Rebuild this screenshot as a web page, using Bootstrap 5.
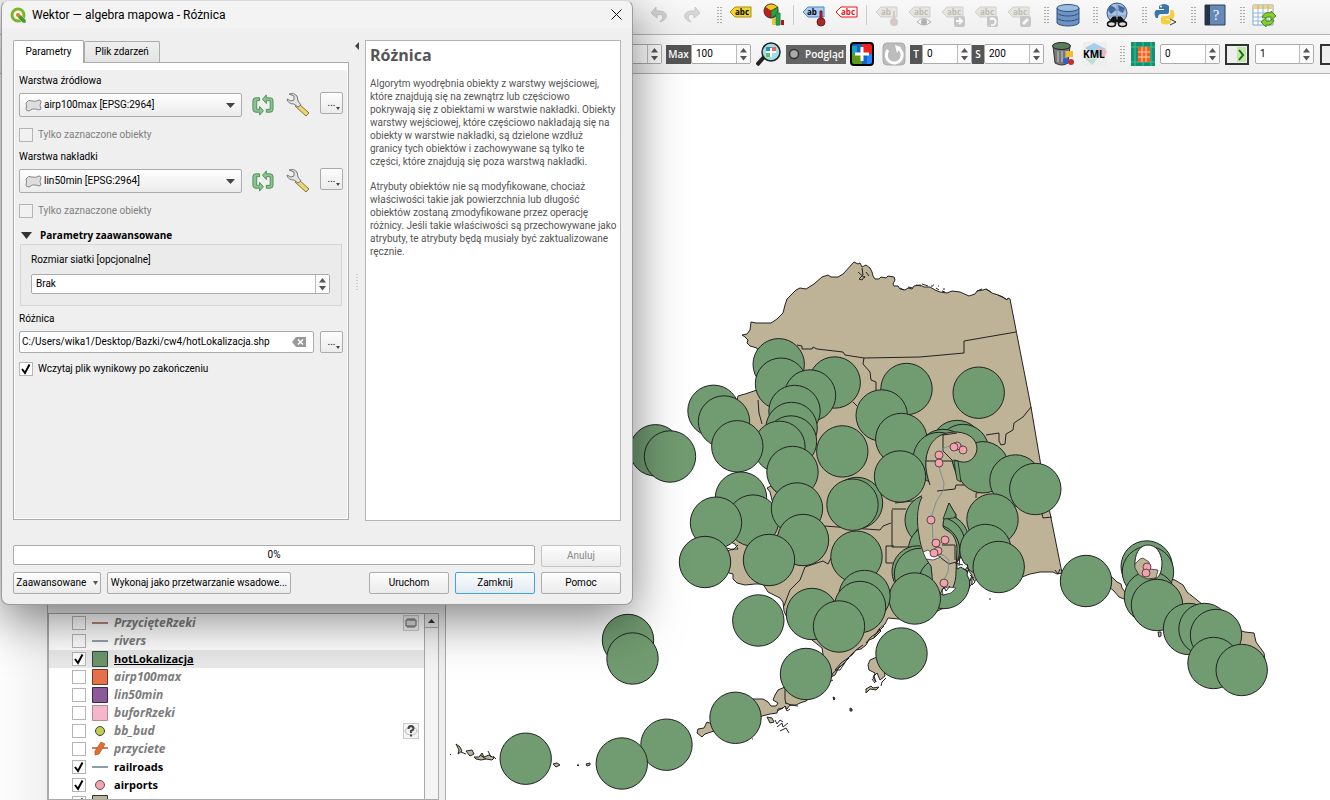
<!DOCTYPE html>
<html lang="pl">
<head>
<meta charset="utf-8">
<meta name="viewport" content="width=device-width, initial-scale=1">
<title>Wektor — algebra mapowa - Różnica</title>
<link href="https://cdn.jsdelivr.net/npm/bootstrap@5.3.0/dist/css/bootstrap.min.css" rel="stylesheet">
<style>
:root{--dlg:632px;--edge:#ababab;--face:#efefef}
body{font:10px/14px Roboto,"Open Sans",sans-serif;color:#000;background:#fff;height:100vh;overflow:hidden}
button,input,select{font:inherit;color:inherit}
svg{display:block;flex:none}
.bold-ui{font-family:"Open Sans",sans-serif;font-weight:700}
/* toolbars */
.tools{background:linear-gradient(#f8f8f8,#efefef);border-bottom:1px solid #b4b4b4;white-space:nowrap;overflow:hidden}
.tools-a{height:35px;padding-left:calc(var(--dlg) + 10px);padding-bottom:4px}
.tools-b{height:39px;padding-left:calc(var(--dlg) - 34px)}
.tools button{border:0;background:none;padding:0;display:flex;justify-content:center;align-items:center;flex:none}
.tools-a button{width:33px;height:30px}
.faded{opacity:.4}
.grip{width:16px;height:18px;flex:none;background:radial-gradient(circle,#aaa 40%,transparent 50%) 9px 0/2px 3px repeat-y,radial-gradient(circle,#aaa 40%,transparent 50%) 12px 0/2px 3px repeat-y}
.bar-line{width:7px;height:20px;flex:none;background:linear-gradient(#ccc,#ccc) center/1px 100% no-repeat}
.dark-tag,.tools button.dark-tag{background:#555;color:#fff;height:19px;line-height:19px;flex:none;font-family:"Open Sans",sans-serif;font-weight:600;text-align:center}
.tools button.preview{width:60px;gap:5px;background:#636363}
.spin{display:flex;background:#fff;border:1px solid var(--edge);border-radius:2px;height:20px;flex:none;overflow:hidden}
.spin input{border:0;outline:0;min-width:0;flex:1;padding:0 4px;background:none}
.spin .arrows{width:14px;border-left:1px solid #bbb;display:flex;align-items:center;justify-content:center;background:#fafafa;flex:none}
/* layer panel */
.gutter{width:47px;background:linear-gradient(90deg,#fdfdfd,#f1f1f1);flex:none}
.layers{width:399px;background:#efefef;border-left:1px solid #aaa;border-right:1px solid #aaa;padding-right:6px;flex:none}
.docked{height:539px;flex:none}
.tree{border:1px solid #aaa;background:#fff;flex:1;min-height:0;overflow:hidden}
.layer{height:18px;padding:0 5px 0 23px;gap:6px;font:700 11px/18px "Open Sans",sans-serif}
.layer.off label{font-size:12px;font-style:italic;color:#7c7c7c}
.layer.current{background:#e9e9e9}
.layer.current label{text-decoration:underline}
.tick{appearance:none;width:14px;height:14px;margin:0;border:1px solid #b5b5b5;background:#fff center/12px 12px no-repeat;flex:none}
.tick:checked{background-image:url("data:image/svg+xml,%3Csvg xmlns='http://www.w3.org/2000/svg' viewBox='0 0 12 12'%3E%3Cpath d='M2 6l3 4 4.500-8.500' fill='none' stroke='%23000' stroke-width='2'/%3E%3C/svg%3E")}
.tick:disabled{background-color:#f1f1f1}
.flag{width:16px;height:16px;border:1px solid #ccc;background:#f4f4f4;display:flex;align-items:center;justify-content:center}
.scroller{width:14px;border-left:1px solid #aaa;background:#f4f4f4;flex:none}
.scroller button{width:13px;height:14px;border:0;border-bottom:1px solid #aaa;background:#eee;padding:3px}
.map-view{min-width:0}
/* dialog */
.tool-dialog{position:absolute;left:1px;top:0;width:632px;max-width:100%;background:var(--face);border:1px solid #9a9a9a;border-top-color:#d8d8d8;border-radius:8px;box-shadow:0 14px 50px rgba(0,0,0,.5)}
.title-row{height:27px;background:#f3f3f3;border-radius:8px 8px 0 0;padding:0 10px 0 8px;font-size:12px;gap:6px}
.title-row button{border:0;background:none;padding:0}
.dialog-body{padding:12px 11px 10px}
.tab{border:1px solid var(--edge);border-bottom:0;border-radius:2px 2px 0 0;background:linear-gradient(#efefef,#e4e4e4);height:21px;padding:0;width:76px}
.tab.on{background:#fff;height:23px;width:71px;margin-bottom:-1px;position:relative}
.page{border:1px solid var(--edge);background:#fff;padding:7px 1px 1px;height:458px}
.page-in{background:var(--face);height:100%;padding:4px}
.left-pane{width:336px;flex:none}
.help-pane{border:1px solid #b5b5b5;background:#fff;padding:4px 2px 4px 4px;width:256px;height:481px;color:#555;line-height:13px;flex:none}
.help-pane h1{font-size:16px;line-height:20px;margin:0 0 12px}
.help-pane p{margin:0 0 12px}
.splitter{width:16px;padding-top:2px;flex:none}
.param-row{margin:4px 0 11px}
.combo{display:flex;align-items:center;gap:2px;height:24px;width:223px;margin-top:1px;border:1px solid var(--edge);border-radius:2px;background:linear-gradient(#fff,#ebebeb);padding:0 6px 0 5px}
.combo select{appearance:none;border:0;outline:0;flex:1;min-width:0;padding:0;background:none}
.face-btn{border:1px solid var(--edge);border-radius:2px;background:linear-gradient(#fdfdfd,#ebebeb);height:22px;padding:0;line-height:18px;color:#000}
.face-btn:disabled{color:#888;border-color:#c4c4c4}
.face-btn.primary{border-color:#3fa3ef;background:linear-gradient(#fafcfd,#e2ebf2)}
.more{width:23px;position:relative}
.more::after{content:"";position:absolute;right:2px;bottom:3px;border:2px solid transparent;border-top:3px solid #444;border-bottom:0}
.icon-btn{border:0;background:none;padding:0}
.field{height:14px;line-height:14px}
.tick-row{height:14px;gap:5px;color:#808080}
.adv{border:1px solid #d4d4d4;background:#ebebeb;height:62px;padding:8px 11px 0 10px;margin:2px 1px 0}
.adv .spin{margin-top:7px}
.out-label{margin-top:6px}
.out-row{margin:5px 0 9px}
.path-box{width:295px;height:22px;border:1px solid var(--edge);border-radius:2px;background:#fff;padding:0 7px 0 2px}
.path-box input{border:0;outline:0;flex:1;min-width:0;padding:0;background:none}
.meter{height:20px;width:522px;border:1px solid var(--edge);border-radius:2px;background:#fff}
.w80{width:80px}
</style>
</head>
<body class="d-flex flex-column">
<svg width="0" height="0" class="position-absolute">
<defs>
<g id="arrows"><path d="M1 5.500L4.500 1 8 5.500z" fill="#555"/><path d="M1 9L4.500 13.500 8 9z" fill="#555"/></g>
<g id="label"><path d="M1 7l5-5h16v10H6z" stroke-width="1"/></g>
<g id="poly"><path d="M1 4q2-4 6-2 4 1 7-1 2 0 2 2-2 3 0 7-2 2-5 0-4-1-7 2-3 0-3-2 1-3 0-6z" fill="#ddd" stroke="#888"/></g>
<g id="cycle"><path d="M8 4H4Q1 4 1 7v9q0 3 3 3h4v3l4-4.500L8 13v3H5V7h3zM15 19h4q3 0 3-3V7q0-3-3-3h-4V1l-4 4.500L15 10V7h4v9h-4z" fill="#8cc191" stroke="#4f8f58" stroke-linejoin="round"/></g>
<g id="wrench"><path d="M12 11l11 10-3 3L9 14z" fill="#ecd573" stroke="#85733b"/><path d="M3 2q5-2 8 2l1 5 3 4-3 2-4-3Q2 12 1 7l4 2 3-1V4z" fill="#e3e3e3" stroke="#777"/></g>
</defs>
</svg>

<header>
<nav class="tools tools-a d-flex align-items-center" aria-label="Etykiety">
<button class="faded"><svg width="20" height="20" viewBox="0 0 20 20"><path d="M7 2L2 8l6 5v-3c6-2 8 2 3 7 9-3 9-12-4-11z" fill="#999" stroke="#777"/></svg></button>
<button class="faded"><svg width="20" height="20" viewBox="0 0 20 20"><path d="M13 2l5 6-6 5v-3C6 8 4 12 9 17 0 14 0 5 13 6z" fill="#aaa" stroke="#888"/></svg></button>
<span class="grip"></span>
<button><svg width="24" height="24" viewBox="0 0 24 24"><g fill="#f3d42a" stroke="#ab9010" transform="translate(0 2)"><use href="#label"/></g><text x="6" y="12" font-size="8" font-weight="700" font-family="Open Sans">abc</text></svg></button>
<button><svg width="24" height="24" viewBox="0 0 24 24"><circle cx="9" cy="8" r="7" fill="#ca1b1b" stroke="#333"/><path d="M9 8L3 4q6-6 13 0z" fill="#f4c717" stroke="#333" stroke-width=".6"/><path d="M9 8l7-4q1 8-7 11z" fill="#2f9e3c" stroke="#333" stroke-width=".6"/><path d="M10 15h3v7h-3z" fill="#f4c717"/><path d="M14 10h4v12h-4z" fill="#2f9e3c" stroke="#185"/><path d="M19 17h3v5h-3z" fill="#b11"/></svg></button>
<span class="bar-line"></span>
<button><svg width="24" height="24" viewBox="0 0 24 24"><g fill="#a9cdf3" stroke="#4c86c9" transform="translate(0 2)"><use href="#label"/></g><text x="5" y="12" font-size="8" font-weight="700" font-family="Open Sans">ab</text><path d="M18 8h2v8h-2z" fill="#a52a2a" stroke="#7a1c1c"/><circle cx="19" cy="19" r="4" fill="#a52a2a" stroke="#7a1c1c"/></svg></button>
<button><svg width="24" height="24" viewBox="0 0 24 24"><g fill="#fff" stroke="#e11" transform="translate(0 2)"><use href="#label"/></g><text x="6" y="12" font-size="8" font-weight="700" fill="#e11" font-family="Open Sans">abc</text></svg></button>
<span class="bar-line"></span>
<button class="faded"><svg width="24" height="24" viewBox="0 0 24 24"><g fill="#d2d0b9" stroke="#999" transform="translate(0 2)"><use href="#label"/></g><text x="6" y="12" font-size="8" font-weight="700" fill="#666" font-family="Open Sans">ab</text><path d="M18 8h2v8h-2z" fill="#a88"/><circle cx="19" cy="19" r="4" fill="#a88"/></svg></button>
<button class="faded"><svg width="24" height="24" viewBox="0 0 24 24"><g fill="#d2d0b9" stroke="#999" transform="translate(0 2)"><use href="#label"/></g><text x="6" y="12" font-size="8" font-weight="700" fill="#666" font-family="Open Sans">abc</text><path d="M9 19q6-7 14 0-7 6-14 0z" fill="#fff" stroke="#555"/><circle cx="16" cy="19" r="3" fill="#555"/></svg></button>
<button class="faded"><svg width="24" height="24" viewBox="0 0 24 24"><g fill="#d2d0b9" stroke="#999" transform="translate(0 2)"><use href="#label"/></g><text x="6" y="12" font-size="8" font-weight="700" fill="#666" font-family="Open Sans">abc</text><rect x="13" y="13" width="11" height="11" rx="2" fill="#888"/><path d="M15 18h6m-3-3l3 3-3 3" stroke="#fff" stroke-width="2" fill="none"/></svg></button>
<button class="faded"><svg width="24" height="24" viewBox="0 0 24 24"><g fill="#d2d0b9" stroke="#999" transform="translate(0 2)"><use href="#label"/></g><text x="6" y="12" font-size="8" font-weight="700" fill="#666" font-family="Open Sans">abc</text><rect x="13" y="13" width="11" height="11" rx="2" fill="#888"/><path d="M16 16a3.500 3.500 0 1 1 1 6m-1-6h4" stroke="#fff" stroke-width="2" fill="none"/></svg></button>
<button class="faded"><svg width="24" height="24" viewBox="0 0 24 24"><g fill="#d2d0b9" stroke="#999" transform="translate(0 2)"><use href="#label"/></g><text x="6" y="12" font-size="8" font-weight="700" fill="#666" font-family="Open Sans">abc</text><rect x="13" y="13" width="11" height="11" rx="2" fill="#888"/><path d="M16 21l5-5" stroke="#fff" stroke-width="3"/></svg></button>
<span class="grip"></span>
<button><svg width="24" height="24" viewBox="0 0 24 24"><path d="M1 5v15c3 4 19 4 22 0V5" fill="#6c93c4" stroke="#33527c"/><ellipse cx="12" cy="5" rx="11" ry="3.500" fill="#9cbbe0" stroke="#33527c"/><path d="M1 10c3 4 19 4 22 0M1 15c3 4 19 4 22 0" fill="none" stroke="#33527c"/></svg></button>
<span class="grip"></span>
<button><svg width="26" height="26" viewBox="0 0 26 26"><circle cx="13" cy="11" r="10" fill="#a6c2e0" stroke="#34557f"/><path d="M6 4q5 0 6 4l-5 4-3-4zM14 3l7 3-2 5-4-2z" fill="#3f6698"/><path d="M3 8h20M3 14h20M13 1v20" stroke="#5b80ad" stroke-width=".6"/><path d="M9 15l3 0v3l2 0v-3h3l5 6-6 1-3-3-3 3-6-1z" fill="#111" stroke="#111"/><g fill="#ddd" stroke="#111" stroke-width="1.500"><ellipse cx="7.500" cy="22" rx="4" ry="2.500"/><ellipse cx="18.500" cy="22" rx="4" ry="2.500"/></g></svg></button>
<span class="grip"></span>
<button><svg width="24" height="24" viewBox="0 0 24 24"><path d="M5 3q5-4 10 0v6q0 2-3 2H7q-3 0-3 4H2q-3-5 0-8h8V6H5z" fill="#3b77a8"/><path d="M16 7h3q3 5 0 9h-7v1h5v3q-5 3-10 0v-5q0-2 3-2h4q3-1 2-6z" fill="#f7cf3c"/><circle cx="7" cy="3.500" r="1" fill="#fff"/><path d="M16 16l6 3-6 3" fill="none" stroke="#333"/></svg></button>
<span class="grip"></span>
<button><svg width="22" height="24" viewBox="0 0 22 24"><path d="M1 2h20v20H1z" fill="#6689b8" stroke="#2f4257"/><path d="M1 2h5v20H1z" fill="#253444"/><text x="9" y="17" font-size="14" fill="#fff" font-family="Liberation Serif">?</text></svg></button>
<span class="grip"></span>
<button><svg width="24" height="24" viewBox="0 0 24 24"><path d="M1 2h20v20H1z" fill="#fff" stroke="#7ba4cc"/><path d="M1 2h20v4H1z" fill="#f3d27b"/><path d="M1 10h20M1 14h20M1 18h20M6 2v20M11 2v20M16 2v20" stroke="#8fb6dc"/><path d="M10 14q3-6 9-4V8l5 5-5 4v-3q-4-1-5 1zM22 17q-2 6-8 5v2l-5-5 5-4v3q4 1 5-1z" fill="#8acb2e" stroke="#4a8a16"/></svg></button>
</nav>

<nav class="tools tools-b d-flex align-items-center" aria-label="Raster">
<div class="spin me-1" style="width:64px"><input aria-label="Min" value=""><span class="arrows"><svg width="9" height="15"><use href="#arrows"/></svg></span></div>
<label class="dark-tag" for="mx" style="width:25px">Max</label>
<div class="spin" style="width:60px"><input id="mx" value="100"><span class="arrows"><svg width="9" height="15"><use href="#arrows"/></svg></span></div>
<button style="margin:0 5px"><svg width="25" height="24" viewBox="0 0 25 24"><path d="M8 15l-7 8" stroke="#222" stroke-width="4"/><circle cx="15" cy="10" r="9" fill="#9fe0e6" stroke="#222" stroke-width="1.500"/><path d="M10 5h5v5h-5z" fill="#2c8fb0"/><path d="M15 5h5v5h-5z" fill="#e66"/><path d="M10 10h5v5h-5z" fill="#6b6"/><path d="M15 6v9M10 10h10" stroke="#fff" stroke-width="2"/></svg></button>
<button class="dark-tag preview"><svg width="12" height="12"><circle cx="6" cy="6" r="4.500" fill="#aaa" stroke="#333" stroke-width="1.500"/></svg>Podgląd</button>
<button style="margin:0 8px 0 4px"><svg width="24" height="24" viewBox="0 0 24 24"><rect x="1" y="1" width="22" height="22" rx="3" fill="#1663c7"/><path d="M12 2h10v10H12z" fill="#e22"/><path d="M2 12h10v10H2z" fill="#5d9a16"/><path d="M2 4h5v8H2z" fill="#14a5b8"/><path d="M17 12h5v10h-5z" fill="#2686ff"/><path d="M12 5v14M5 12h14" stroke="#fff" stroke-width="3"/><rect x="1" y="1" width="22" height="22" rx="3" fill="none" stroke="#000" stroke-width="2"/></svg></button>
<button><svg width="24" height="24" viewBox="0 0 24 24"><rect x="1" y="1" width="22" height="22" rx="4" fill="#bcbcbc" stroke="#aaa"/><path d="M6 8a8 8 0 1 0 10-2" fill="none" stroke="#fff" stroke-width="3"/><path d="M13 3l6 2-4 6z" fill="#fff"/></svg></button>
<label class="dark-tag ms-1" for="tt" style="width:12px">T</label>
<div class="spin" style="width:50px"><input id="tt" value="0"><span class="arrows"><svg width="9" height="15"><use href="#arrows"/></svg></span></div>
<label class="dark-tag" for="ss" style="width:12px">S</label>
<div class="spin" style="width:60px"><input id="ss" value="200"><span class="arrows"><svg width="9" height="15"><use href="#arrows"/></svg></span></div>
<button style="margin:0 8px 0 7px"><svg width="24" height="24" viewBox="0 0 24 24"><path d="M2 4l2 17q7 4 13 0l2-17z" fill="#777" stroke="#333"/><path d="M7 9v11M11 9v11M15 9v10" stroke="#ccc"/><ellipse cx="10.500" cy="4" rx="9" ry="3.500" fill="#587d5b" stroke="#222"/><path d="M15 9h7v6h-7z" fill="#f2bd2b"/><circle cx="15" cy="19" r="3" fill="#2b62c4"/><circle cx="20" cy="20" r="3" fill="#cc2b2b"/></svg></button>
<button><svg width="24" height="24" viewBox="0 0 24 24"><path d="M0 0h24v24H0z" fill="#eee"/><path d="M2 6l9-5 12 6-8 9z" fill="#a5cdec"/><path d="M13 5l11 4-3 8z" fill="#f2b5b5"/><path d="M2 16l12 1-5 6z" fill="#b9dfd2"/><text x="0" y="16" font-size="10" font-weight="700" font-family="Open Sans">KML</text></svg></button>
<span class="grip ms-1 me-1"></span>
<button><svg width="24" height="24" viewBox="0 0 24 24"><path d="M0 0h24v24H0z" fill="#119174"/><path d="M4 0v24M20 0v24M0 5h24M0 20h24M12 0v24" stroke="#44c08b"/><path d="M7 5h12v15H7z" fill="#ff5a1f"/><path d="M11 5v15M15 5v15M7 10h12M7 15h12" stroke="#ffd9a6"/></svg></button>
<div class="spin" style="width:60px;margin:0 5px"><input aria-label="Pasmo" value="0"><span class="arrows"><svg width="9" height="15"><use href="#arrows"/></svg></span></div>
<button><svg width="24" height="24" viewBox="0 0 24 24"><path d="M1 3h22v19H1z" fill="#eee" stroke="#333" stroke-width="2"/><path d="M12 5h9v15h-9z" fill="#bfe8a4"/><path d="M14 8l4 5-4 5" fill="none" stroke="#1a6a1a" stroke-width="2"/></svg></button>
<div class="spin" style="width:59px;margin:0 6px"><input aria-label="Krok" value="1"><span class="arrows"><svg width="9" height="15"><use href="#arrows"/></svg></span></div>
<button><svg width="24" height="24" viewBox="0 0 24 24"><path d="M1 3h22v19H1z" fill="#eee" stroke="#333" stroke-width="2"/></svg></button>
</nav>
</header>

<main class="d-flex flex-grow-1" style="min-height:0">
<div class="gutter"></div>
<aside class="layers d-flex flex-column">
<div class="docked"></div>
<div class="tree d-flex">
<div class="flex-grow-1">
<div class="layer off d-flex align-items-center"><input class="tick" type="checkbox" id="l1"><svg width="16" height="4"><path d="M0 2h16" stroke="#b28675" stroke-width="2"/></svg><label for="l1">PrzycięteRzeki</label><span class="flag ms-auto"><svg width="12" height="10" viewBox="0 0 12 10"><path d="M1 2h10v6H1z" fill="#ddd" stroke="#666"/><path d="M3 0v2M5 0v2M7 0v2M9 0v2M3 8v2M5 8v2M7 8v2M9 8v2" stroke="#666"/></svg></span></div>
<div class="layer off d-flex align-items-center"><input class="tick" type="checkbox" id="l2"><svg width="16" height="4"><path d="M0 2h16" stroke="#95a2a8" stroke-width="2"/></svg><label for="l2">rivers</label></div>
<div class="layer current d-flex align-items-center"><input class="tick" type="checkbox" id="l3" checked><svg width="16" height="16"><path d="M.5.5h15v15H.5z" fill="#6c9569" stroke="#344"/></svg><label for="l3">hotLokalizacja</label></div>
<div class="layer off d-flex align-items-center"><input class="tick" type="checkbox" id="l4"><svg width="16" height="16"><path d="M.5.5h15v15H.5z" fill="#e77148" stroke="#733824"/></svg><label for="l4">airp100max</label></div>
<div class="layer off d-flex align-items-center"><input class="tick" type="checkbox" id="l5"><svg width="16" height="16"><path d="M.5.5h15v15H.5z" fill="#8d5a99" stroke="#3d2743"/></svg><label for="l5">lin50min</label></div>
<div class="layer off d-flex align-items-center"><input class="tick" type="checkbox" id="l6"><svg width="16" height="16"><path d="M.5.5h15v15H.5z" fill="#f3b6cb" stroke="#b68898"/></svg><label for="l6">buforRzeki</label></div>
<div class="layer off d-flex align-items-center"><input class="tick" type="checkbox" id="l7"><svg width="16" height="16"><circle cx="8" cy="8" r="4.500" fill="#bfcf4b" stroke="#444"/></svg><label for="l7">bb_bud</label><span class="flag ms-auto"><svg width="14" height="14" viewBox="0 0 14 14"><ellipse cx="7" cy="7" rx="6" ry="4" fill="#eee" stroke="#bbb"/><path d="M4.500 5q0-3 2.500-3t2.500 2.500Q9.500 6 7 7v2" fill="none" stroke="#444" stroke-width="2"/><path d="M6 10.500h2v2H6z" fill="#444"/></svg></span></div>
<div class="layer off d-flex align-items-center"><input class="tick" type="checkbox" id="l8"><svg width="16" height="14"><path d="M0 6h16" stroke="#b28675" stroke-width="2"/><path d="M9 0l4 2-6 10-4 1V9z" fill="#e2702c" stroke="#b4501a" stroke-width=".7"/></svg><label for="l8">przyciete</label></div>
<div class="layer d-flex align-items-center"><input class="tick" type="checkbox" id="l9" checked><svg width="16" height="4"><path d="M0 2h16" stroke="#8fa0a3" stroke-width="2"/></svg><label for="l9">railroads</label></div>
<div class="layer d-flex align-items-center"><input class="tick" type="checkbox" id="l10" checked><svg width="16" height="16"><circle cx="8" cy="8" r="4.500" fill="#f5a3ae" stroke="#555"/></svg><label for="l10">airports</label></div>
<div class="layer d-flex align-items-center"><input class="tick" type="checkbox" id="l11" checked><svg width="16" height="16"><path d="M.5.5h15v15H.5z" fill="#beb297" stroke="#333"/></svg><label for="l11">regions</label></div>
</div>
<div class="scroller"><button aria-label="Przewiń w górę"><svg width="7" height="5"><path d="M0 5l3.500-4L7 5z" fill="#333"/></svg></button></div>
</div>
</aside>
<section class="map-view flex-grow-1" aria-label="Mapa">
<svg width="100%" height="100%" viewBox="446 74 884 726" preserveAspectRatio="xMinYMin meet" stroke="#232323" stroke-linejoin="round">
<g fill="#beb297">
<path d="M854 262L858 264 860 263 862 267 866 265 870 268 872 272 873 276 875 279 879 279 881 277 886 278 888 276 894 277 895 280 893 284 894 286 898 286 900 289 905 290 908 288 912 289 914 286 920 285 924 287 930 287 935 290 940 292 947 293 952 291 960 292 969 296 975 294 977 291 983 290 986 289 992 293 998 295 1003 297 1007 300 1008 298 1010 299 1016.500 332.500 1031 407 1043 478 1062 573 1057 574 1053 572 1040 572 1030 574 1022 577 1004 580 985 570 970 586 962 600 935 612 910 620 888 618 885 624 879 629 881 631 874 638 869 640 866 645 861 649 856 650 852 655 848 658 844 664 839 667 835 675 829 678 826 684 820 690 806 701 800 703 796 705 790 705 787 709 785 706 783 708 778 709 777 713 770 714 762 716 740 728 728 718 750 705 753 699 763 699 768 702 771 706 776 706 778 703 773 700 775 695 778 690 785 687 800 675 812 665 824 661 822 648 812 640 800 625 788 620 784 611 783 602 780 598 768 592 763 584 755 584 745 585 737 583 733 579 733 574 729 573 720 555 732 549 738 549 735 544 726 540 735 530 765 518 775 510 772 500 770 492 767 488 771 486 776 492 780 485 768 470 760 455 750 425 735 410 738 396 745 394 757 390 765 375 757 348 750 346 747 343 748 340 745 337 742 335 747 334 750 330 751 322 756 323 771 323 777 319 783 313 785 305 787 299 792 294 796 290 800 288 806 289 814 284 822 277 828 275 831 277 838 277 843 274z"/>
<path d="M697 733l1-4 6-1 3-6 5 2 2 7-9 3-3 3zM1108 575l5 3 4 4 4 2 1 4 3 4 3 3-4 4-5-2-5-6-6-5zM1165 578l10 2 8 5 4 7 10 8 16 13 25 17 7 2 9 1 2 9 8 11 1 8-25-4-50-18-40-30zM868 665l2-5 7-3 7 12 1 7-5 4-3-7-3 3 2 6-3-4 2-5-6-3zM866 689l5-3 2 2 6-1-3 3-6-1-4 4zM456 744l4 3 2 4-4 3 1-4zM466 751l6-1 2 4-4 2zM474 757l5 0 3-4 2 4 5-2 5 3-2 2-6-1-5 1-5-1zM553 764l4-1 3 2-4 2zM586 764l4-1 0 2-3 1zM577 765l2 0-1 1zM767 717l5 1 2 4-4 1zM1158 632l3 0 0 4-2 1zM850 708l2 1 0 2-2 0zM833 697l2 1-1 2z"/>
</g>
<path d="M858 272l7 6M862 268l1 7-4 4 3 1 3-4M866 272l3 4M900 288l4 2M908 287l5 1M916 285l5 1M922 284l6 2M931 286l2 0M936 288l3 2M942 291l3 1M977 291l5-2M986 289l5 3M998 295l8 4M933 285h1M938 286h1M943 289h2M849 658l-9 9-7 6-2 5M863 645l-7 5-8 8-7 5-6 7 5 0 4-6M884 626l-7 7-6 4-5 6M833 680l-6 3M879 629l-5 8M775 720l2 4 3-4 3 2M777 727l5-4 1 4 5-4M780 731l6-3 3 5M785 707l2 4 3-2M786 703l5 2M790 705l8 1M777 711l6-3M488 751l3 6M480 755l6 4M493 756l3 3M450 754l1 1M461 752l5 2M886 678l-4 4-1 4M872 679l3 4M746 741l3-2M752 739h1M834 697v3M851 709v2M990 598v2" fill="none"/>
<path d="M797 345l5 1v3l10 0 1-2 4 2 26 3 2 3 19 3 56-1 44-4v-12l52-9M864 358l-1 6 7 8 1 8 5 2v9M1031 407l-8 10-9 6-1 7-7 4-1 10-4 1-2-4v-8l-13 2M758 400l1 13 3 11M853 402l4 4M824 526l14 1 42 3 3-4 8-3M892 510v37h16M892 509h14M895 503l26-3 16-9 18-2 1-4h9M886 546v17h7M886 546h8M805 567l-5 13-10 10-6 16M805 567l18-6 5 3 3-6M976 498v-5l14-2M1042 514l1 4 9-1M785 688v11l1 5M727 548l6 2 5-5" fill="none"/>
<g fill="#719b70">
<circle cx="778.700" cy="364.300" r="25.700"/><circle cx="781" cy="383.700" r="25.700"/><circle cx="834.700" cy="382.500" r="25.700"/><circle cx="810" cy="395.500" r="25.700"/><circle cx="794.500" cy="411" r="25.700"/><circle cx="791.600" cy="428" r="25.700"/><circle cx="791" cy="441.500" r="25.700"/><circle cx="906.500" cy="389" r="25.700"/><circle cx="978.700" cy="392.700" r="25.700"/><circle cx="881.700" cy="415.500" r="25.700"/><circle cx="901.300" cy="439" r="25.700"/><circle cx="779.400" cy="446.800" r="25.700"/>
<circle cx="655.500" cy="450.300" r="25.700"/><circle cx="670" cy="456.500" r="25.700"/><circle cx="713.500" cy="410.800" r="25.700"/><circle cx="724" cy="421.500" r="25.700"/><circle cx="737.300" cy="446.300" r="25.700"/><circle cx="842.300" cy="451.400" r="25.700"/><circle cx="741" cy="497.700" r="25.700"/><circle cx="792.500" cy="472" r="25.700"/><circle cx="753" cy="520.600" r="25.700"/><circle cx="716" cy="522.700" r="25.700"/><circle cx="797" cy="508.500" r="25.700"/><circle cx="803" cy="540" r="25.700"/><circle cx="705" cy="562" r="25.700"/><circle cx="769" cy="560" r="25.700"/><circle cx="857" cy="503" r="25.700"/><circle cx="852.500" cy="504.700" r="25.700"/><circle cx="856.500" cy="556.700" r="25.700"/>
<circle cx="957" cy="446" r="25.700"/><circle cx="963" cy="450" r="25.700"/><circle cx="943" cy="455" r="25.700"/><circle cx="939" cy="458" r="25.700"/><circle cx="900" cy="476.500" r="25.700"/><circle cx="983" cy="467.300" r="25.700"/><circle cx="1015.500" cy="480.500" r="25.700"/><circle cx="1035.300" cy="489" r="25.700"/>
<circle cx="930.700" cy="520" r="25.700"/><circle cx="943" cy="540" r="25.700"/><circle cx="939" cy="543" r="25.700"/><circle cx="934" cy="550" r="25.700"/><circle cx="917.700" cy="571.500" r="25.700"/><circle cx="920" cy="574" r="25.700"/><circle cx="944" cy="583" r="25.700"/></g>
<!-- corridor left uncovered along the railroad -->
<path d="M927 456C928 440 940 432 957 432 970 433 977 440 977 449 976 458 969 463 962 462 957 461 954 459 952 461L953 467 957 478 964 487 972 491 976 494 968 497 960 500 956 512 952 520 949 503 945 512 943 522C941 528 945 530 950 533 957 537 958 545 956 553L956 572C956 584 953 592 943 595 934 592 931 584 932 572L931 565C926 561 923 555 922 552 917 530 915 512 919 503L922 497 922 495 927 484C930 484 930 482 928 475 926 467 926 462 927 456z" fill="#beb297" stroke="none"/>
<path d="M922 497C916 508 917 525 919 535 921 550 926 560 931 566L932 575C932 586 938 595 944 595 952 593 956 584 956 572L957 548C956 535 950 532 945 529 942 527 943 522 945 516L949 503 956 515M930 485C923 467 926 455 929 448 935 434 948 432 957 432 970 433 977 440 977 449 976 458 969 463 962 462 957 461 954 459 952 461L955 470 958 480M937 491l18-2 1-4h7" fill="none"/>
<path d="M949 503l-6 16 11-1 2-3zM954 461l3 19 4 2-3-21z" fill="#719b70" stroke-width=".8"/>
<g fill="#719b70"><circle cx="992.500" cy="519.500" r="25.700"/><circle cx="985.500" cy="550" r="25.700"/><circle cx="998.700" cy="567" r="25.700"/><circle cx="914.800" cy="598.500" r="25.700"/>
<circle cx="758.300" cy="620.500" r="25.700"/><circle cx="864.500" cy="596" r="25.700"/><circle cx="812" cy="614" r="25.700"/><circle cx="860" cy="607" r="25.700"/><circle cx="839" cy="626.500" r="25.700"/><circle cx="901.500" cy="653.500" r="25.700"/><circle cx="806" cy="674" r="25.700"/><circle cx="628" cy="640" r="25.700"/><circle cx="632.500" cy="658.500" r="25.700"/><circle cx="735.500" cy="717.800" r="25.700"/><circle cx="666.500" cy="744.700" r="25.700"/><circle cx="621.800" cy="763.500" r="25.700"/><circle cx="525.700" cy="758.700" r="25.700"/>
<circle cx="1086" cy="581" r="25.700"/><circle cx="1146.700" cy="566.500" r="25.700"/><circle cx="1148" cy="572" r="25.700"/><circle cx="1150" cy="597" r="25.700"/><circle cx="1157" cy="605" r="25.700"/><circle cx="1189" cy="629" r="25.700"/><circle cx="1204.500" cy="629" r="25.700"/><circle cx="1216" cy="635" r="25.700"/><circle cx="1213.500" cy="663" r="25.700"/><circle cx="1241.700" cy="670" r="25.700"/>
</g>
<path d="M923 552l5-2 5 4 8 3-8 3-7-1zM942 589l6-2 8 1-5 5-8 2z" fill="#fff" stroke-width=".7"/>
<path d="M957 562l4-5 3 6 4 3-3 4-4-3-4 2zM968 570l4 5-2 6-3-6zM972 577l3 5-3 3z" fill="#fff"/>
<path d="M955 563l8 2M960 556l-1 10M963 568l5 4M967 564l2 7M970 575l4 3M940 594l4-7 2 4 4-5M943 434v17l9 9M943 435l14-2M926 461h27M942 545h13v15M941 558l8 6 7-2M1055 570l3 4 2-5" fill="none"/>
<path d="M939 459l1 12 4 12-1 8-7 11-4 13 1 25 5 3-4 10 9 2 6 5-1 12-4 8M939 455l5-7 8-3 10 0 4 5" fill="none" stroke="#7f8d91"/>
<path d="M1148 545c8 0 13 7 14 17 0 11-3 16-8 17-13 0-20-9-19-18 1-10 6-16 13-16z" fill="#fff"/>
<path d="M1135 564l5-5 3-1 6 4 1 7 8 1-2 8-9 1-8-4-4-7z" fill="#beb297" stroke-width=".7"/>
<g fill="#f3a1ad" stroke-width=".7"><circle cx="939" cy="455" r="4"/><circle cx="939" cy="463" r="4"/><circle cx="957" cy="446" r="4"/><circle cx="954" cy="447" r="4"/><circle cx="963" cy="450" r="4"/><circle cx="931" cy="520" r="4"/><circle cx="936" cy="543" r="4"/><circle cx="945" cy="540" r="4"/><circle cx="938" cy="551" r="4"/><circle cx="934" cy="553" r="4"/><circle cx="944" cy="583" r="4"/><circle cx="1147" cy="567" r="4"/><circle cx="1146" cy="573" r="4"/></g>
</svg>
</section>
</main>

<div class="tool-dialog" role="dialog" aria-labelledby="dlg-title">
<div class="title-row d-flex align-items-center">
<svg width="16" height="16" viewBox="0 0 16 16"><circle cx="8" cy="8" r="6" fill="none" stroke="#7ab52c" stroke-width="3"/><path d="M8 8h3l5 5v3h-3l-5-5z" fill="#4b9a28" stroke="#f3f3f3" stroke-width=".5"/><circle cx="8" cy="8" r="2" fill="#ee7913"/></svg>
<span id="dlg-title">Wektor — algebra mapowa - Różnica</span>
<button class="ms-auto" aria-label="Zamknij okno"><svg width="11" height="11"><path d="M.5.5l10 10M10.500.5l-10 10" stroke="#111"/></svg></button>
</div>
<div class="dialog-body">
<div class="d-flex">
<div class="left-pane">
<div class="d-flex align-items-end"><button class="tab on">Parametry</button><button class="tab">Plik zdarzeń</button></div>
<div class="page"><div class="page-in">
<label class="field d-block" for="src">Warstwa źródłowa</label>
<div class="param-row d-flex">
<div class="combo"><svg width="17" height="13"><use href="#poly"/></svg><select id="src"><option>airp100max [EPSG:2964]</option></select><svg width="9" height="5"><path d="M0 0h9L4.500 5z" fill="#444"/></svg></div>
<button class="icon-btn ms-2" aria-label="Iteruj"><svg width="24" height="24" viewBox="-2 -1 25 25"><use href="#cycle"/></svg></button>
<button class="icon-btn ms-2" aria-label="Opcje"><svg width="25" height="25" class="ms-1"><use href="#wrench"/></svg></button>
<button class="face-btn more ms-auto">...</button></div>
<div class="tick-row d-flex align-items-center"><input class="tick" type="checkbox" id="only1" disabled><label for="only1">Tylko zaznaczone obiekty</label></div>
<label class="field d-block mt-2" for="ovl">Warstwa nakładki</label>
<div class="param-row d-flex">
<div class="combo"><svg width="17" height="13"><use href="#poly"/></svg><select id="ovl"><option>lin50min [EPSG:2964]</option></select><svg width="9" height="5"><path d="M0 0h9L4.500 5z" fill="#444"/></svg></div>
<button class="icon-btn ms-2" aria-label="Iteruj"><svg width="24" height="24" viewBox="-2 -1 25 25"><use href="#cycle"/></svg></button>
<button class="icon-btn ms-2" aria-label="Opcje"><svg width="25" height="25" class="ms-1"><use href="#wrench"/></svg></button>
<button class="face-btn more ms-auto">...</button></div>
<div class="tick-row d-flex align-items-center"><input class="tick" type="checkbox" id="only2" disabled><label for="only2">Tylko zaznaczone obiekty</label></div>
<div class="bold-ui d-flex align-items-center" style="gap:8px;margin:10px 0 0 2px"><svg width="11" height="7"><path d="M0 0h11L5.500 7z" fill="#333"/></svg>Parametry zaawansowane</div>
<div class="adv"><label class="field d-block" for="grid">Rozmiar siatki [opcjonalne]</label>
<div class="spin"><input id="grid" value="Brak"><span class="arrows"><svg width="9" height="15"><use href="#arrows"/></svg></span></div></div>
<label class="field d-block out-label" for="out">Różnica</label>
<div class="d-flex out-row"><div class="path-box d-flex align-items-center"><input id="out" value="C:/Users/wika1/Desktop/Bazki/cw4/hotLokalizacja.shp"><svg width="14" height="10"><path d="M4 0h10v10H4L0 5z" fill="#999"/><path d="M6 2.500l5 5m0-5l-5 5" stroke="#fff" stroke-width="1.500"/></svg></div><button class="face-btn more ms-auto">...</button></div>
<div class="tick-row d-flex align-items-center text-black"><input class="tick" type="checkbox" id="load" checked><label for="load">Wczytaj plik wynikowy po zakończeniu</label></div>
</div></div>
</div>
<div class="splitter d-flex flex-column align-items-center"><svg width="4" height="8"><path d="M4 0v8L0 4z" fill="#444"/></svg><svg width="2" height="18" style="margin-top:224px"><path d="M1 0v18" stroke="#aaa" stroke-dasharray="1 2"/></svg></div>
<div class="help-pane"><h1 class="bold-ui">Różnica</h1>
<p>Algorytm wyodrębnia obiekty z warstwy wejściowej,<br>które znajdują się na zewnątrz lub częściowo<br>pokrywają się z obiektami w warstwie nakładki. Obiekty<br>warstwy wejściowej, które częściowo nakładają się na<br>obiekty w warstwie nakładki, są dzielone wzdłuż<br>granicy tych obiektów i zachowywane są tylko te<br>części, które znajdują się poza warstwą nakładki.</p>
<p>Atrybuty obiektów nie są modyfikowane, chociaż<br>właściwości takie jak powierzchnia lub długość<br>obiektów zostaną zmodyfikowane przez operację<br>różnicy. Jeśli takie właściwości są przechowywane jako<br>atrybuty, te atrybuty będą musiały być zaktualizowane<br>ręcznie.</p></div>
</div>
<div class="d-flex justify-content-between" style="margin:24px 0 5px"><div class="meter d-flex align-items-center justify-content-center" role="progressbar" aria-valuenow="0" aria-valuemin="0" aria-valuemax="100">0%</div><button class="face-btn w80" disabled>Anuluj</button></div>
<div class="d-flex" style="gap:6px"><button class="face-btn" style="width:88px">Zaawansowane <svg class="d-inline-block ms-1" width="5" height="4"><path d="M0 0h5L2.500 4z" fill="#555"/></svg></button><button class="face-btn" style="width:184px">Wykonaj jako przetwarzanie wsadowe...</button><button class="face-btn w80 ms-auto">Uruchom</button><button class="face-btn primary w80">Zamknij</button><button class="face-btn w80">Pomoc</button></div>
</div>
</div>
<script src="https://cdn.jsdelivr.net/npm/bootstrap@5.3.0/dist/js/bootstrap.bundle.min.js"></script>
</body>
</html>
